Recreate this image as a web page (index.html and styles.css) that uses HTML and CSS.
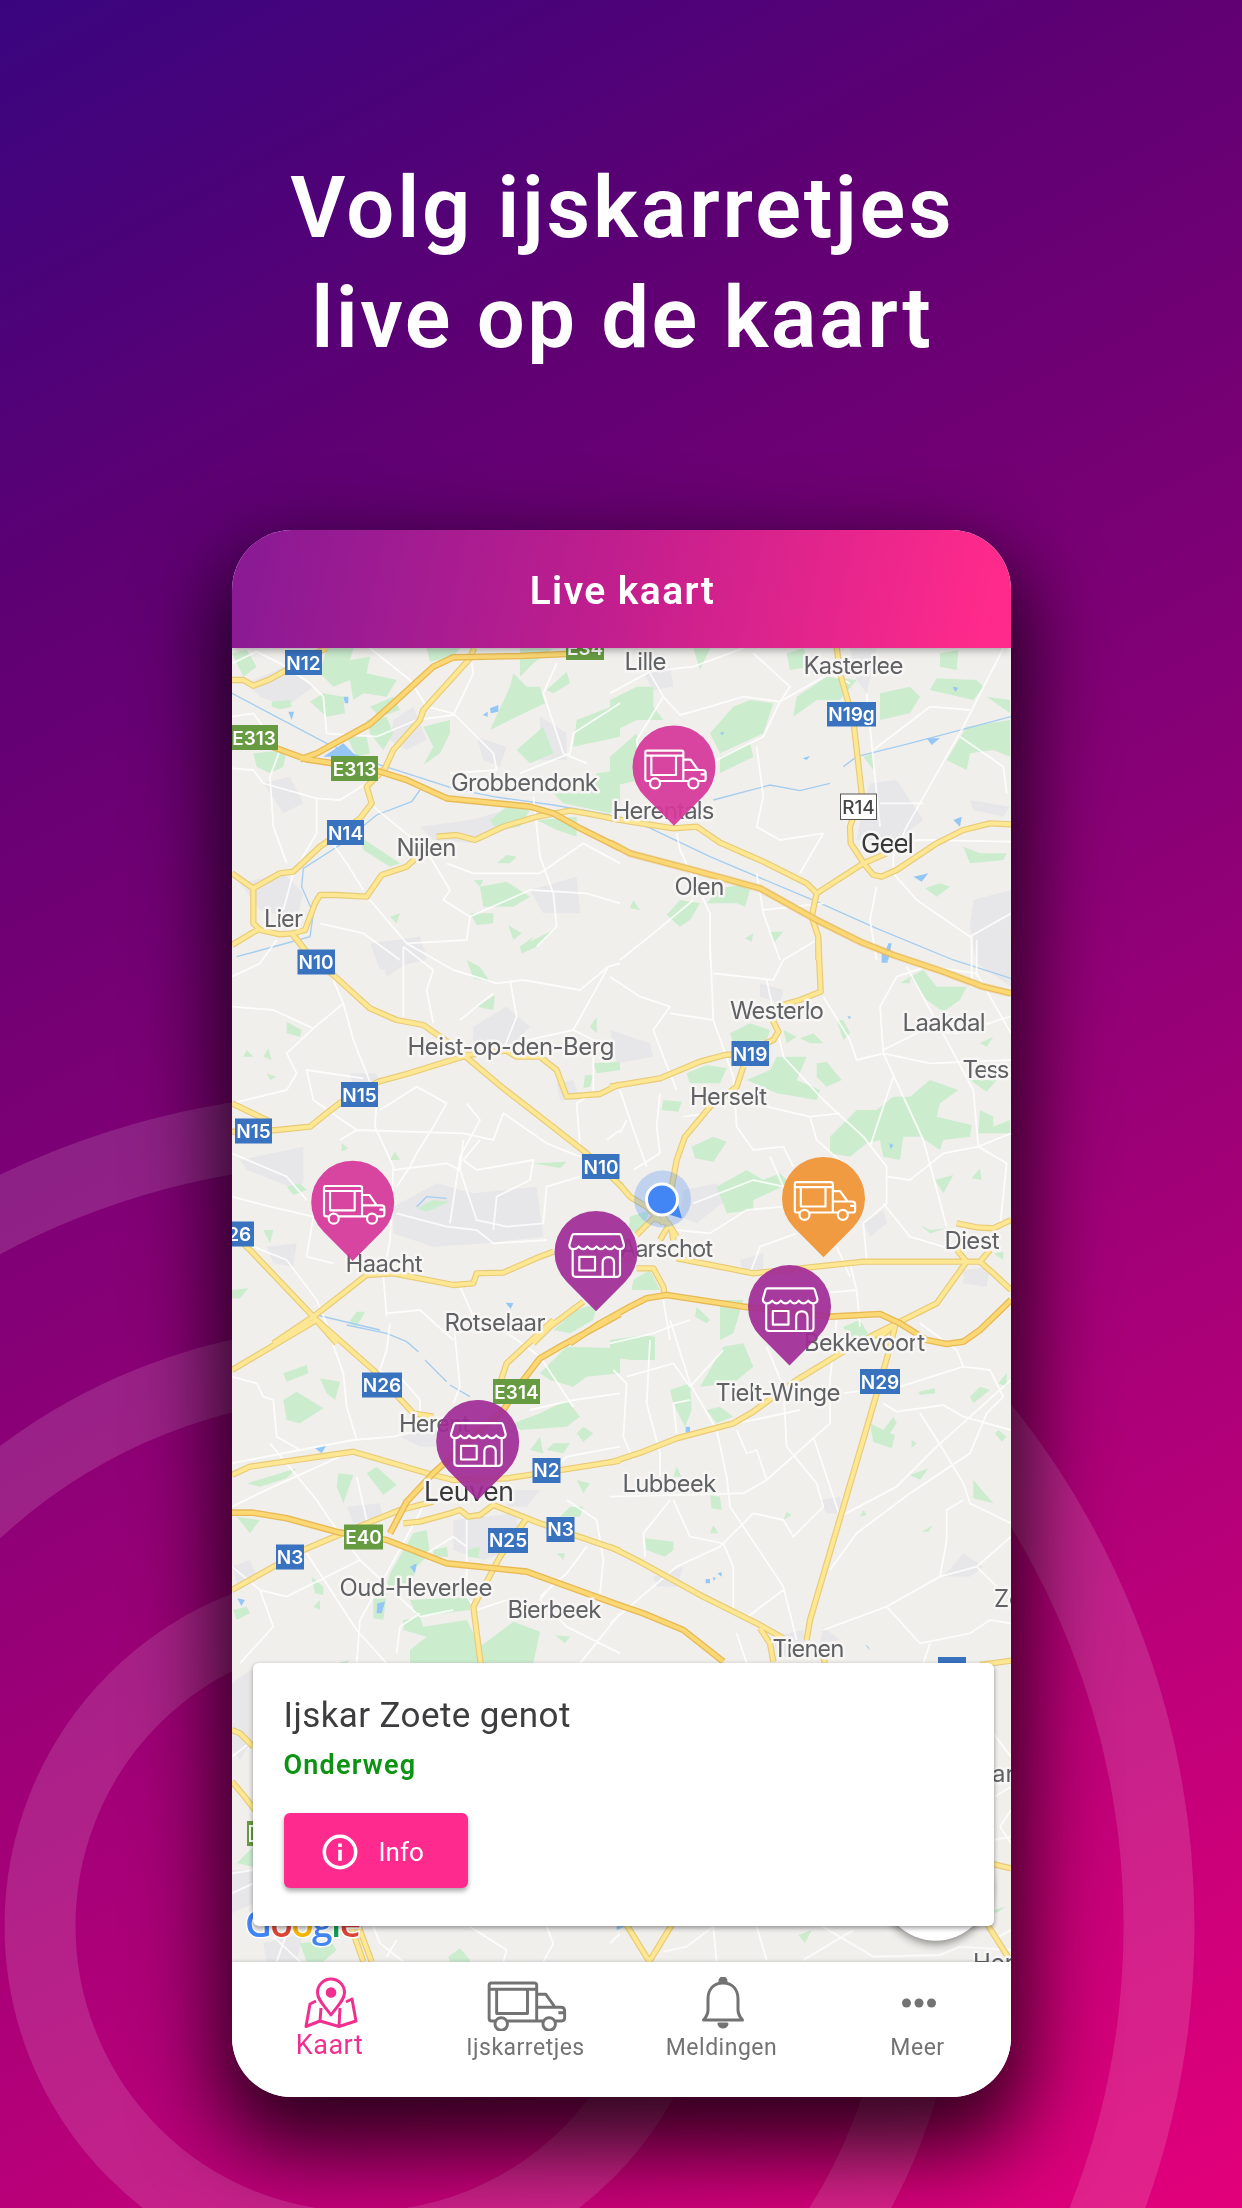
FILE: index.html
```html
<!DOCTYPE html>
<html lang="nl">
<head>
<meta charset="utf-8">
<title>Live kaart</title>
<link rel="stylesheet" href="styles.css">
</head>
<body>
<main class="poster">
  <svg class="rings" viewBox="0 0 1242 2208" aria-hidden="true">
    <circle cx="361" cy="1926" r="321" stroke-width="71"/>
    <circle cx="361" cy="1926" r="565" stroke-width="71"/>
    <circle cx="361" cy="1926" r="798" stroke-width="71"/>
  </svg>
  <h1 class="headline"><span class="line-one">Volg ijskarretjes</span><br><span class="line-two">live op de kaart</span></h1>
  <section class="phone">
    <header class="app-bar">Live kaart</header>
    <div class="map">
      <svg class="map-canvas" viewBox="232 648 779 1314">
        <defs>
          <g id="roads">
            <g transform="translate(220 520) scale(.33333)">
              <path d="M36 480 70 480 100 497 150 478 200 450 250 415 320 385M762 385 750 415 610 570 600 600 520 690 495 745 440 800 455 850 420 895 350 945 300 980 220 1055 180 1060 100 1105 36 1060M100 1105V1210L120 1230 180 1243 220 1240 255 1230 285 1150 300 1125 350 1125 440 1130 485 1065 560 1040 590 1012M36 1275 115 1228M215 1240 270 1310M650 950 710 945 765 960 850 920 950 890 1050 872 1100 880 1200 900"/>
            </g>
            <g transform="translate(610 520) scale(.33333)">
              <path d="M-10 892 60 905 190 925 260 920 330 968 460 1025 590 1090 620 1120 760 1030 830 1000M680 380 690 460 730 600 755 820 720 920 722 970 765 1035 790 1065 815 1070 860 1050 980 970 1060 930 1140 910 1203 913M620 1120 605 1190 625 1250V1320"/>
            </g>
            <g transform="translate(220 940) scale(.33333)">
              <path d="M225 -10 270 50 340 105 450 205 530 240 610 255 660 290 740 345 860 332 890 350 960 350 1010 390 1040 470 1140 462 1200 432M36 575 170 570 270 560 320 520 365 485 475 425 560 402 735 348 850 445 960 530 1100 640 1205 740M36 490 150 545M36 880 90 930 280 1130 350 1210M160 1210 280 1130 440 1005 520 1000 700 1035 760 1030 770 1000 850 998 960 950 1000 935M940 1210 990 1160 1090 1085"/>
            </g>
            <g transform="translate(610 940) scale(.33333)">
              <path d="M625 0 632 155 570 180 500 200 490 245 505 275 490 300 400 340 345 345 270 365 150 415 0 440M400 380 380 440 300 500 225 590 200 660 180 770M30 735 60 770 110 800 160 850M140 800 185 870 190 900M80 885 130 835 175 850 200 890M150 900 180 850M200 955 430 1000 760 965 1070 965 1110 965 1150 1000 1203 1050M1070 965 1045 935 1045 900M1040 850 1100 862 1150 865 1203 840M1140 930 1110 965M1070 965 980 1090 860 1150 800 1200M80 985 130 985 160 1040 165 1070M30 960 70 950"/>
            </g>
            <g transform="translate(220 1320) scale(.33333)">
              <path d="M36 150 290 0 460 150 580 280 640 290M1000 0 860 130 840 190M36 465 90 440 400 395 640 465 700 480 860 475 960 460 1200 422M36 810 250 690 380 635 540 570 640 545M550 610 600 605 690 580 720 570 745 590 780 585 820 555 960 610 1200 692M920 595 840 710 760 860 782 1030"/>
            </g>
            <g transform="translate(610 1320) scale(.33333)">
              <path d="M0 428 100 395 200 355 370 310 430 275 560 180 700 95 860 10M0 680 80 720 280 830 440 910 520 955M450 925 480 970 490 1025M835 100 780 290 600 900 590 960M640 1010 645 1030M1110 1035 1203 1022M860 0 840 80M780 50 860 10"/>
            </g>
            <g transform="translate(220 1650) scale(.33333)"><path d="M36 240 60 250 100 290M36 395 70 435 105 480M395 835 430 935M412 820 455 935"/></g>
            <g transform="translate(610 1650) scale(.33333)"><path d="M50 825 118 935 185 825M1140 640 1203 655M1130 820 1200 930"/></g>
          </g>
          <g id="highways">
            <path transform="translate(220 520) scale(.33333)" d="M240 718 290 700 450 612 520 550 640 440 700 412 900 408 1040 402M36 640 170 685 260 718 340 730 480 755 560 780 680 835 930 860 1000 880 1080 925 1200 985"/>
            <path transform="translate(610 520) scale(.33333)" d="M0 968 60 1000 250 1050 450 1105 620 1200 750 1265 850 1305 1000 1355 1120 1400 1203 1420"/>
            <path transform="translate(610 940) scale(.33333)" d="M-120 1210 -30 1150 60 1100 110 1075 170 1065 400 1100 660 1130 810 1122 870 1150 950 1200 1010 1212 1060 1205 1110 1170 1203 1080"/>
            <path transform="translate(220 1320) scale(.33333)" d="M1200 -18 1140 15 1020 80 960 115 910 180 850 270 640 460 560 545 510 640M36 578 100 578 200 595 360 638 500 660 680 730 920 755 1200 856 1270 880 1390 930 1510 1025"/>
          </g>
          <g id="truck">
            <path d="M-72 42H-80Q-86 42-86 36V-44Q-86-49-80-49H22Q28-49 28-44V42M-42 42H43M73 42H88Q95 42 95 35V18Q95 9 86 9H28M28-22H50L72 9M95 22H80M-86-34H28M-68-34V24H6V-34"/>
            <circle cx="-57" cy="49" r="15"/><circle cx="58" cy="49" r="15"/>
          </g>
          <g id="store">
            <path d="M-66-55H70Q74-55 76-50L84-22C84-8 64-6 56-18Q42-2 28-18Q14-2 2-18Q-12-2-26-18Q-38-2-52-18C-60-6-80-8-80-22L-72-50Q-70-55-66-55ZM-70-8V64Q-70 73-61 73H63Q72 73 72 64V-8M-50 13H-3V54H-50ZM20 73V31Q20 14 37 14Q54 14 54 31V73"/>
          </g>
          <path id="pin" d="M0 58.7-29.3 29.3A41.5 41.5 0 1 1 29.3 29.3Z"/>
        </defs>

        <g class="urban">
          <path transform="translate(220 520) scale(.33333)" d="M80 490 190 440 280 500 200 560 120 530ZM520 600 580 560 620 660 560 690 510 660ZM130 790 210 770 250 850 190 880ZM600 920 750 900 900 860 930 900 760 970 640 960ZM60 1090 190 1060 250 1120 230 1200 120 1170ZM770 650 860 680 840 740 790 720ZM930 1110 1070 1070 1080 1180 970 1180ZM960 590 1040 640 1040 720 960 720ZM450 1270 600 1250 620 1320 480 1350Z"/>
          <path transform="translate(610 520) scale(.33333)" d="M100 460 180 440 190 500 130 510ZM720 385 800 385 770 520 740 480ZM780 790 860 780 940 900 860 960 740 960 760 850ZM1080 840 1200 860 1180 890 1090 870ZM1090 1140 1203 1110V1400L1100 1330 1080 1220Z"/>
          <path transform="translate(220 940) scale(.33333)" d="M760 260 860 200 930 260 880 310 760 320ZM60 660 250 620 250 730 210 740 80 690ZM520 800 650 730 760 760 950 740 970 890 800 910 640 920 520 880ZM390 400 470 400 480 460 400 440ZM480 30 560 0 620 30 500 110ZM140 920 230 910 220 980 160 970ZM1010 430 1060 420 1080 480 1020 480Z"/>
          <path transform="translate(610 940) scale(.33333)" d="M0 270 120 310 130 350 20 370ZM450 130 520 150 510 190 450 170ZM220 750 320 730 350 780 260 850 210 830ZM390 960 460 940 460 1010 400 1000ZM760 850 820 810 830 850 780 890ZM1060 990 1140 980 1130 1040 1060 1030Z"/>
          <path transform="translate(220 1320) scale(.33333)" d="M380 560 480 550 490 600 400 610ZM540 350 660 320 660 380 600 380ZM700 600 890 580 900 680 790 720 700 690ZM870 510 960 510 920 560 860 560ZM36 740 90 720 110 770 50 790Z"/>
          <path transform="translate(610 1320) scale(.33333)" d="M630 540 690 530 700 580 650 580ZM1000 770 1060 700 1120 740 1080 770ZM130 770 220 740 200 800 140 800ZM640 920 690 960 630 970ZM490 950 580 930 600 1010 500 1010Z"/>
          <path transform="translate(220 1650) scale(.33333)" d="M36 100 90 60V280L60 330 36 300ZM36 660 100 660V760L36 790ZM130 880 250 850 230 935 140 935Z"/>
        </g>
        <g class="parks">
          <path transform="translate(220 520) scale(.33333)" d="M320 385 400 385 390 420 450 410 440 460 530 480 500 530 430 520 400 540 390 480 340 500 300 460ZM36 400 80 390 110 440 70 470ZM155 545 210 540 215 560 180 568 155 560ZM270 545 310 520 370 530 375 580 320 590ZM450 560 520 530 540 570 480 590ZM440 600 500 590 520 640 490 690 450 640ZM380 650 440 650 450 700 410 710ZM100 700 200 690 190 740 150 760 110 740ZM620 385 720 385 700 410 630 425ZM900 385 1000 385 940 430 900 470ZM810 630 870 500 880 460 920 500 960 500 975 550 890 590ZM1040 455 1050 490 1000 520 980 510ZM970 620 1000 700 930 730 890 690ZM610 620 690 600 690 640 660 700 610 735 640 680ZM1070 600 1200 550 1200 650 1060 680ZM1130 760 1200 750 1200 850 1170 880 1030 850 1000 820 1100 820ZM810 900 860 860 930 870 900 920 830 930ZM950 900 1070 890 1070 950 1010 930ZM420 950 540 1030 510 1040 430 990ZM780 1100 860 1085 930 1130 880 1160 790 1160ZM760 1080 790 1080 780 1100ZM830 1030 860 1005 890 1010 870 1030ZM750 1180 820 1180 820 1210 770 1215ZM865 1215 905 1240 880 1260ZM900 1280 1000 1230 950 1280 905 1300ZM510 1190 540 1180 530 1210Z"/>
          <path transform="translate(610 520) scale(.33333)" d="M0 540 80 500 130 500 130 560 160 600 80 600 0 640ZM300 640 370 560 420 540 490 550 460 640 330 700ZM330 710 420 670 430 710 330 760ZM0 710 80 640 90 780 0 800ZM250 385 300 385 270 450ZM530 400 580 385 600 440 540 450ZM550 590 560 530 650 470 740 480 690 540 620 540ZM810 520 900 500 930 530 900 580 810 600ZM960 510 980 475 1100 480 1120 500 1090 540ZM990 400 1045 390 1040 450 990 440ZM1130 530 1200 540V580ZM1070 620 1200 600V710L1150 690 1080 700 1070 750 1010 720ZM760 710 790 700 790 750ZM1060 980 1110 1000 1190 1000 1180 1020 1080 1030ZM945 1105 990 1090 1020 1100 980 1130ZM330 1105 390 1095 420 1110 405 1160 380 1150 290 1150ZM170 1185 210 1140 270 1150 240 1200 210 1220ZM60 1165 70 1140 90 1170ZM480 1235 520 1235 490 1270ZM405 1255 430 1240 425 1265Z"/>
          <path transform="translate(220 940) scale(.33333)" d="M740 60 780 80 810 125 760 115ZM770 200 825 165 820 210ZM900 20 940 -10 910 40ZM200 245 245 270 240 290 200 280ZM70 350 80 330 100 350ZM130 350 145 325 155 360ZM140 400 170 410 150 420ZM1120 370 1200 365V390L1130 400ZM1095 405 1120 405 1110 440 1090 445ZM1110 260 1130 230V280ZM940 670 1040 665 1020 685ZM200 740 240 730 260 750 220 765ZM36 1050 85 1045 60 1075 36 1075ZM130 870 160 870 150 910ZM385 1150 410 1115 435 1115 410 1160ZM510 660 525 635 540 660ZM365 610 385 625 365 635ZM1000 1170 1070 1110 1130 1090 1120 1140 1050 1180ZM590 805 640 780 690 785 620 815Z"/>
          <path transform="translate(610 940) scale(.33333)" d="M360 280 420 250 480 270 470 300 370 310ZM520 270 560 290 530 310ZM570 295 610 280 640 310 600 310ZM680 240 700 240 720 280 700 300ZM500 350 590 350 560 420 630 450 620 480 500 460 410 420 480 390ZM230 400 290 375 350 385 330 430 240 430ZM620 370 650 365 695 420 650 440 620 410ZM160 480 215 485 205 515 155 510ZM660 590 740 510 800 510 850 470 900 470 960 420 1045 450 990 490 980 530 1085 555 1080 590 1000 600 990 630 930 590 880 590 870 660 820 650 810 600 770 610 720 650 660 640ZM900 110 940 90 980 140 1070 140 1050 180 1000 215 950 180ZM870 130 900 110 900 130ZM1080 420 1160 420 1130 455ZM1110 510 1150 530 1150 560 1200 540V580L1105 580ZM1110 310 1150 290 1130 320ZM245 620 310 590 350 605 310 665 255 655ZM320 740 410 690 460 720 510 700 540 730 430 780 430 810 350 820ZM60 830 120 810 90 880 55 870ZM975 720 1030 705 1000 760ZM1085 715 1110 685 1115 720ZM70 1020 120 990 150 1050 65 1050ZM260 1100 300 1140 290 1150 255 1130ZM330 1080 400 1080 370 1180 330 1200ZM930 855 960 870 1010 865 960 880ZM1150 940 1180 935 1180 960ZM700 1160 750 1140 780 1190 720 1200Z"/>
          <path transform="translate(220 1320) scale(.33333)" d="M190 160 260 135 265 160 200 185ZM300 175 360 185 345 240 320 220ZM190 240 230 215 310 265 240 310 200 300ZM80 490 230 445 200 475 120 500ZM355 460 400 465 370 550 350 500ZM440 460 470 440 530 495 490 525ZM50 590 120 600 90 640ZM510 760 580 640 620 630 630 700 590 740 570 800 500 800ZM640 690 680 680 685 710 640 710ZM460 820 500 820 490 900 460 895ZM570 840 750 830 750 870 590 890ZM550 900 600 890 610 920 740 900 780 980 880 905 960 935 940 1030 570 1030 570 990 620 950 550 930ZM960 160 1040 80 1200 85V160L1100 170 1060 200 990 180ZM880 310 960 280 1040 240 1080 290 1040 320 900 330ZM1070 340 1090 320 1120 340 1090 365ZM930 390 960 350 970 400ZM980 390 1000 370 1050 370 1030 400ZM1070 480 1110 490 1090 520ZM1020 590 1050 560 1090 560 1080 590ZM740 690 780 680 775 715 745 710ZM275 770 310 800 310 825 285 820ZM280 860 300 840 300 870ZM1005 945 1050 950 1035 970ZM40 870 80 860 90 880 50 900ZM1010 700 1035 700 1030 720Z"/>
          <path transform="translate(610 1320) scale(.33333)" d="M0 60 100 45 135 50 135 120 60 120 0 110ZM340 80 400 70 430 140 370 190 270 200ZM180 210 240 190 245 270 225 320 190 250ZM290 270 330 260 370 290 320 310ZM190 470 200 440 215 470ZM300 525 330 530 335 570 305 565ZM300 640 310 615 325 640ZM105 655 190 665 190 690 165 710 110 690ZM520 600 530 575 545 585ZM780 310 820 330 850 290 860 310 840 340 855 345 845 385 790 365ZM900 465 955 445 930 480ZM1090 480 1150 550 1090 535ZM935 635 970 615 955 635ZM925 215 975 205 975 220 930 225ZM1080 230 1110 200 1140 210 1090 250ZM1165 190 1190 160V200ZM1155 340 1165 330 1190 350 1175 365ZM750 590 760 570 770 585ZM905 360 920 370 905 385Z"/>
          <path transform="translate(220 1650) scale(.33333)" d="M50 640 100 590V650ZM240 880 330 870 350 900 310 935H260ZM685 920 720 895 750 930V935H690ZM570 0H945L930 40H570ZM350 40 390 30 380 40Z"/>
          <path transform="translate(610 1650) scale(.33333)" d="M565 855 605 840 585 880ZM1150 780 1185 770 1160 790Z"/>
        </g>
        <g class="water">
          <path transform="translate(220 520) scale(.33333)" d="M36 520 320 670 480 735 700 805 820 830 1000 855 1170 885M600 810 575 845 470 885 360 975 250 1045 245 1100 280 1180 270 1250 180 1275 50 1310"/>
          <path transform="translate(610 520) scale(.33333)" d="M90 910 300 1010 620 1145 800 1225 1030 1320 1203 1375M310 840 480 795 570 812 660 790M700 740 740 710 900 670 1203 590"/>
          <path transform="translate(220 940) scale(.33333)" d="M590 800 620 770 680 775M290 1125 480 1170"/>
          <path transform="translate(220 1320) scale(.33333)" d="M380 15 500 40 560 65 595 95M615 120 680 185M690 195 750 230"/>
          <path class="lake" transform="translate(220 520) scale(.33333)" d="M310 710 370 670 410 710ZM370 530 385 530 385 550 375 550ZM810 565 835 555 835 575 812 580ZM205 575 222 575 215 600ZM788 585 803 575V590Z"/>
          <path class="lake" transform="translate(610 520) scale(.33333)" d="M1030 900 1055 890 1050 920ZM950 655 990 655 965 675ZM910 1070 955 1060 935 1085ZM835 1270 845 1270 835 1320H818ZM578 715 600 708 590 720ZM330 638 344 636 336 646ZM1028 500 1045 503 1036 516Z"/>
          <path class="lake" transform="translate(610 940) scale(.33333)" d="M815 40 833 45V68H815ZM838 610 850 615 842 628ZM712 228 723 230 718 238Z"/>
          <path class="lake" transform="translate(220 1320) scale(.33333)" d="M285 385 320 375 305 400ZM472 850 495 845 485 880 470 880ZM570 740 590 730 585 760ZM52 835 75 840 64 858ZM638 1435 680 1425 640 1450Z"/>
          <path class="lake" transform="translate(610 1320) scale(.33333)" d="M227 320H240V338H227ZM287 777 300 777 300 790 287 790ZM322 760 335 757V770ZM308 772 318 774 311 782ZM765 972 775 980 780 992ZM20 1818 50 1818 20 1830Z"/>
          <path class="lake" transform="translate(220 940) scale(.33333)" d="M857 1088 880 1090 872 1107Z"/>
        </g>
        <g class="lanes">
          <path transform="translate(220 520) scale(.33333)" d="M36 430 110 395 180 430 270 490 310 530 320 640 470 650 590 600 700 585 760 460 750 400M450 385 570 480 620 560 700 580 820 700 830 750 690 760M36 745 100 750 130 790 290 835 360 840 440 790M290 835V940L220 1060 190 1170M36 590 100 580 180 690 150 770 160 920 200 1030M460 860 570 950 630 1010 690 1110 670 1140 750 1190 930 1110 1100 1120 1200 1150M940 830 960 1010 1000 1120 1010 1220 950 1280M1010 430 970 520 1030 700 1100 730M1200 550 1060 640 1050 700 900 760M330 960 380 1030 430 1110M450 1140 560 1270 740 1260 750 1190M300 1210 430 1240 540 1320M680 1030 760 1060 960 1060 1090 970 1200 1030"/>
          <path transform="translate(610 520) scale(.33333)" d="M0 520 120 455 250 440 400 385M120 460 160 530 210 585 300 560 400 530 510 545 660 460 720 490M430 400 540 500 510 545 460 650 300 730M160 530 80 660 100 820M440 680 460 830 440 920 510 960 640 940 570 1060M200 940 210 990 300 1180 300 1320M1180 385 1060 620 890 920 850 1010 850 1060 920 1140 1080 1250 1203 1180M1050 650 1180 740 1190 820M810 850 940 850M790 690 960 560 1080 570M770 520 810 920M930 960 1203 965M850 965 930 960M800 1100 780 1200 800 1320M440 1060 460 1180 510 1320M250 1140 130 1240 30 1320M460 1170 640 1150M1085 1250V1400"/>
          <path transform="translate(220 940) scale(.33333)" d="M36 200 160 210 280 265 370 190 340 120M280 265 200 340 230 400 200 450 36 490M370 190 400 300 440 400 470 480 465 560 520 680 510 900 490 1010 500 1130M550 20 550 230M550 20 640 90 620 150 640 250M560 10 700 90 830 130 910 120 1080 150 1165 80 1200 70M1165 80 1060 270 880 310M870 120 890 230 850 330M720 240 820 160M1060 270 1120 300 1120 460 1070 490 1080 620M36 640 200 710 260 780M36 770 150 800 280 830 260 950 340 970M100 920 200 960 290 1080 340 1200M360 600 410 570 730 580 820 600 850 520 980 610 1080 650M410 570 280 480 260 390 430 415M480 510 590 440 680 490 640 560 590 640 570 680 530 740M520 690 680 670 720 690 770 840 860 860 970 850 980 740 1080 710M530 820 680 860 770 870 820 910 980 900M740 490 780 540 720 650 690 850M780 600 730 660 770 690 940 660 930 720 830 770 820 870M720 1040 760 1130 840 1160M500 1120 600 1110 700 1200M730 600 720 690M1200 570 1160 600M36 110 120 70 170 0"/>
          <path transform="translate(610 940) scale(.33333)" d="M300 0 310 240 370 410 380 560 430 630 520 620 550 680M0 110 90 170 180 200 130 270 160 350 200 450M310 240 180 220M310 100 490 120 520 60 620 0M470 120 520 350 640 480 760 590 830 680 830 790 760 850 770 960M640 170 720 300 740 360 820 340 960 370 1203 360M820 340 810 200 860 110 950 80M820 340 940 600 1010 860M850 410 780 620M890 80 1020 320 1090 450 1105 620 1203 580M1105 620 1000 640 900 720 830 710M1105 620 1190 670 1170 860M470 500 600 530 690 520M600 530 620 600 700 670M250 790 430 720 520 740 480 650M200 870 300 880 410 810 520 800M420 1000 450 920 560 880M820 790 900 890 1030 930M960 80 1100 100 1203 280M1100 0 1100 110M820 330 940 270 1040 280 1200 230M30 450 60 540 110 680M30 580 50 540M150 460 140 560 150 640 70 690M220 530 300 520M630 1060 740 1050 750 1160M740 1050 720 970M160 1080 180 1200M680 920 720 1010"/>
          <path transform="translate(220 1320) scale(.33333)" d="M36 170 110 190 130 230 160 240 170 350 240 390 400 360 520 350 640 320M240 390 36 430M150 370 290 540 330 600 420 720 600 890 700 870M320 20 370 160 380 260 410 360M480 150 500 90 510 10M460 150 540 170 600 240 600 290M36 560 160 500 360 410M620 540 500 760 420 900 410 1030M260 700 410 930 500 1030M36 740 120 810 200 830 420 720M120 810 160 920 60 1030M700 0 720 200 700 250M740 580 740 830 770 870 860 840M530 1000 540 920 600 880M620 700 700 650 740 680M930 270 1060 240 1200 220M970 480 1040 410 1200 380M1040 540 1130 600 1150 720 1140 820M1000 790 960 840 1040 920 1200 1000M1100 680 1040 760 960 830M850 30 960 110 1060 260M1080 1030 1200 880M410 470 440 600"/>
          <path transform="translate(610 1320) scale(.33333)" d="M0 70 130 40 180 20 240 0M120 60 110 250 150 400 150 470M10 150 50 190 40 350 70 420M180 0 240 190 320 330 350 470 360 560 520 800 560 960M50 170 190 130 240 200 340 90M240 240 190 250 200 340M380 330 410 400 440 390 470 480 400 520 0 530M470 480 660 310 660 180 680 0M470 80 520 200 530 380 620 490 640 560 550 650 520 600 430 580 400 610 330 680 200 740 0 910M610 350 690 590 860 500 980 380 1203 180M660 750 740 640 900 520 1080 400 1130 280 1180 230 1140 150 1060 140 870 200M820 250 860 275 1000 255 1060 290 1203 330M930 280 1000 390 1060 490 1080 550 1203 610M1060 540 1010 570 1010 660 990 770 830 860 640 930M990 770 1100 740 1203 650M1100 740 1160 800M830 860 930 970 1080 940 1140 900 1203 910M190 540 240 650 340 670 370 740 370 880M180 540 100 640 105 710M400 900 520 810M960 970 940 1030M930 10 1040 90 1060 140M380 940 410 1030M700 220 840 200M370 310 430 300 570 270"/>
          <path transform="translate(220 1650) scale(.33333)" d="M36 320 100 270M36 670 100 660M36 730 100 700M200 850 170 935M160 860 240 935M460 830 480 880 550 935M750 830 860 900 850 935M980 830 1000 880 970 935M500 920 530 870"/>
          <path transform="translate(610 1650) scale(.33333)" d="M160 905 230 890 310 830 320 935M440 830 470 930M580 930 730 840M630 825 790 920 990 915 1050 890 1203 900M1150 250 1203 320M1155 440 1203 410M1203 480 1170 530 1203 580M1150 570 1203 560M1150 870 1203 840M0 880 30 850"/>
        </g>
        <use href="#roads" class="road-casing"/>
        <use href="#roads" class="road-core"/>
        <use href="#highways" class="highway-casing"/>
        <use href="#highways" class="highway-core"/>

        <g class="towns">
          <text x="451" y="790.500" textLength="147">Grobbendonk</text>
          <text x="396.500" y="855.500" textLength="60">Nijlen</text>
          <text x="264" y="926.500" textLength="39">Lier</text>
          <text x="624.500" y="669.500" textLength="42">Lille</text>
          <text x="803.500" y="673.500" textLength="100">Kasterlee</text>
          <text x="612.500" y="819" textLength="102">Herentals</text>
          <text class="city" x="861" y="852.500" textLength="53">Geel</text>
          <text x="674.500" y="894.500" textLength="50">Olen</text>
          <text x="407.500" y="1054.500" textLength="207">Heist-op-den-Berg</text>
          <text x="345.500" y="1272" textLength="77">Haacht</text>
          <text x="444.500" y="1331" textLength="101">Rotselaar</text>
          <text x="730" y="1018.500" textLength="94">Westerlo</text>
          <text x="902.500" y="1030.500" textLength="83">Laakdal</text>
          <text x="962.500" y="1077.500" textLength="47">Tess</text>
          <text x="690" y="1104.500" textLength="77">Herselt</text>
          <text x="944.500" y="1248.500" textLength="55">Diest</text>
          <text x="620" y="1256.500" textLength="93">Aarschot</text>
          <text x="399" y="1431.500" textLength="71">Herent</text>
          <text class="city" x="424" y="1500.500" textLength="90">Leuven</text>
          <text x="339.500" y="1596" textLength="153">Oud-Heverlee</text>
          <text x="507.500" y="1617.500" textLength="94">Bierbeek</text>
          <text x="804" y="1350.500" textLength="121">Bekkevoort</text>
          <text x="715.500" y="1400.500" textLength="125">Tielt-Winge</text>
          <text x="622.500" y="1491.500" textLength="94">Lubbeek</text>
          <text x="772.500" y="1656.500" textLength="72">Tienen</text>
          <text x="994" y="1607">Zo</text>
          <text x="992" y="1782">ar</text>
          <text x="973" y="1971">Her</text>
        </g>

        <g class="shields">
          <rect x="285" y="650" width="37" height="25"/><text x="303.500" y="669.500">N12</text>
          <rect x="327" y="820" width="37" height="25"/><text x="345.500" y="839.500">N14</text>
          <rect x="297.500" y="949.500" width="37.500" height="25"/><text x="316" y="969">N10</text>
          <rect x="827" y="702" width="49" height="24.500"/><text x="851.500" y="721">N19g</text>
          <rect x="341" y="1082" width="37" height="25"/><text x="359.500" y="1101.500">N15</text>
          <rect x="235" y="1118.500" width="37" height="25"/><text x="253.500" y="1138">N15</text>
          <rect x="214" y="1221.500" width="40" height="25"/><text x="232" y="1241">N26</text>
          <rect x="582" y="1154" width="37.500" height="25"/><text x="601" y="1173.500">N10</text>
          <rect x="731.500" y="1041" width="37.500" height="25"/><text x="750" y="1060.500">N19</text>
          <rect x="362" y="1372.500" width="40" height="25"/><text x="382" y="1392">N26</text>
          <rect x="532.500" y="1458" width="28" height="25"/><text x="546.500" y="1477">N2</text>
          <rect x="546.500" y="1517" width="28" height="25"/><text x="560.500" y="1536">N3</text>
          <rect x="488" y="1528" width="40" height="25"/><text x="508" y="1547">N25</text>
          <rect x="276" y="1544.500" width="28" height="25"/><text x="290" y="1564">N3</text>
          <rect x="860" y="1369" width="40" height="25"/><text x="880" y="1388.500">N29</text>
          <rect x="938" y="1657" width="28" height="25"/>
          <rect class="euro" x="228" y="725" width="50" height="25"/><text x="254" y="744.500">E313</text>
          <rect class="euro" x="331" y="756" width="47" height="25"/><text x="354.500" y="775.500">E313</text>
          <rect class="euro" x="566" y="636" width="38" height="24"/><text x="585" y="655">E34</text>
          <rect class="euro" x="493" y="1379" width="47" height="25"/><text x="516.500" y="1398.500">E314</text>
          <rect class="euro" x="344" y="1524.500" width="39" height="25"/><text x="363.500" y="1544">E40</text>
          <rect class="euro" x="247" y="1821" width="30" height="25"/><path class="euro-mark" d="M250 1826h8v15h-8z"/>
          <rect class="ring" x="840.500" y="794" width="36" height="25.500"/><text class="ring-label" x="858.500" y="813.500">R14</text>
        </g>

        <circle class="gps-halo" cx="662.500" cy="1199" r="28.500"/>
        <path class="gps-dot" d="M682 1218.500 664 1213 677 1201Z"/>
        <circle class="gps-dot gps-ring" cx="662" cy="1199.500" r="15.500"/>

        <g class="pin pink" transform="translate(674 767)"><use href="#pin"/><use href="#truck" class="pin-icon" transform="scale(.33333)"/></g>
        <g class="pin pink" transform="translate(352.700 1202.300)"><use href="#pin"/><use href="#truck" class="pin-icon" transform="scale(.33333)"/></g>
        <g class="pin orange" transform="translate(823.500 1198.500)"><use href="#pin"/><use href="#truck" class="pin-icon" transform="scale(.33333)"/></g>
        <g class="pin purple" transform="translate(596 1252.500)"><use href="#pin"/><use href="#store" class="pin-icon" transform="scale(.33333)"/></g>
        <g class="pin purple" transform="translate(789.500 1306.700)"><use href="#pin"/><use href="#store" class="pin-icon" transform="scale(.33333)"/></g>
        <g class="pin purple" transform="translate(477.700 1441.500)"><use href="#pin"/><use href="#store" class="pin-icon" transform="scale(.33333)"/></g>

        <text class="google" x="245" y="1937" textLength="116"><tspan fill="#4285f4">G</tspan><tspan fill="#db4437">o</tspan><tspan fill="#f4b400">o</tspan><tspan fill="#4285f4">g</tspan><tspan fill="#0f9d58">l</tspan><tspan fill="#db4437">e</tspan></text>
        <circle class="locate" cx="935.700" cy="1885.700" r="55"/>
      </svg>
      <article class="vendor">
        <h2 class="vendor-name">Ijskar Zoete genot</h2>
        <p class="vendor-status">Onderweg</p>
        <button class="info-button" type="button">
          <svg width="36" height="36" viewBox="0 0 36 36" aria-hidden="true"><circle cx="18" cy="18" r="15.700" fill="none" stroke="currentColor" stroke-width="3.500"/><path d="M16.200 9.500h3.600v3.600h-3.600zM16.200 15.800h3.600v11h-3.600z" fill="currentColor"/></svg>
          <span>Info</span>
        </button>
      </article>
    </div>
    <nav class="tabs">
      <a class="tab active">
        <svg width="56" height="54" viewBox="0 0 56 54"><path d="M28 38C21 28 14.500 23 14.500 15.500a13.500 13.500 0 0 1 27 0C41.500 23 35 28 28 38ZM13 24 7 27 3 49.500 17 44 36 49.500 53 44 49 22 43 25M18 31 17 44M37 31 36 49.500"/><circle cx="28" cy="15.500" r="3.800" class="solid"/></svg>
        <span>Kaart</span>
      </a>
      <a class="tab">
        <svg width="82" height="54" viewBox="0 0 82 54"><g transform="translate(39 26.500) scale(.417)" class="truck"><use href="#truck"/></g></svg>
        <span>Ijskarretjes</span>
      </a>
      <a class="tab">
        <svg width="56" height="54" viewBox="0 0 56 54"><path d="M28 6C18 6 13 13 13 22V33Q13 38 8.500 43H47.500Q43 38 43 33V22C43 13 38 6 28 6Z"/><path class="solid" d="M25 5V4a3 3 0 0 1 6 0V5ZM24 47H32Q31 50 28 50Q25 50 24 47Z"/></svg>
        <span>Meldingen</span>
      </a>
      <a class="tab">
        <svg width="56" height="54" viewBox="0 0 56 54"><g class="dots"><circle cx="15.500" cy="26" r="4.500"/><circle cx="28" cy="26" r="4.500"/><circle cx="40.500" cy="26" r="4.500"/></g></svg>
        <span>Meer</span>
      </a>
    </nav>
  </section>
</main>
</body>
</html>
```
FILE: styles.css
```css
* { box-sizing: border-box; }
body { margin: 0; font-family: Roboto, "Liberation Sans", sans-serif; }

.poster {
  position: relative;
  width: 1242px;
  height: 2208px;
  overflow: hidden;
  display: flex;
  flex-direction: column;
  align-items: center;
  background: linear-gradient(152deg, #39057f 0%, #5f0073 22%, #8a0076 50%, #b80079 77%, #e2007a 100%);
}
.rings { position: absolute; inset: 0; width: 100%; height: 100%; }
.rings circle { fill: none; stroke: rgba(255, 255, 255, .13); }

.headline {
  position: relative;
  margin: 0;
  padding-top: 153px;
  height: 530px;
  color: #fff;
  font-size: 85px;
  font-weight: 600;
  line-height: 110px;
  text-align: center;
  white-space: nowrap;
}
.line-one { margin-right: -2.800px; letter-spacing: 2.800px; }
.line-two { margin-right: -2.500px; letter-spacing: 2.500px; }

.phone {
  position: relative;
  display: flex;
  flex-direction: column;
  width: 779px;
  height: 1567px;
  overflow: hidden;
  border-radius: 60px;
  background: #fff;
  box-shadow: 0 38px 84px 14px rgba(0, 0, 0, .78);
}

.app-bar {
  position: relative;
  z-index: 1;
  height: 118px;
  flex: none;
  padding: 2px 0 0 3px;
  background: linear-gradient(102deg, #8c1a94 4%, #c01e8e 48%, #ff2a8b 96%);
  box-shadow: 0 2px 8px rgba(0, 0, 0, .35);
  color: #fff;
  font-size: 39px;
  font-weight: 600;
  line-height: 118px;
  letter-spacing: 1.400px;
  text-align: center;
}

.map { position: relative; flex: none; height: 1314px; background: #f0efec; }
.map-canvas { display: block; width: 779px; height: 1314px; }
.urban { fill: #e7e7ea; }
.parks { fill: #ccecce; }
.water { fill: none; stroke: #a5cdf0; stroke-width: 4; }
.water .lake { fill: #94c7f6; stroke: none; }
.lanes { fill: none; stroke: #fff; stroke-width: 5.500; stroke-linejoin: round; opacity: .8; }
.road-casing, .road-core, .highway-casing, .highway-core { fill: none; stroke-linejoin: round; }
.road-casing { stroke: #e9ca78; stroke-width: 19; }
.road-core { stroke: #fde792; stroke-width: 12; }
.highway-casing { stroke: #e8b957; stroke-width: 20; }
.highway-core { stroke: #fbd873; stroke-width: 12; }

.towns {
  font-family: Inter, "Liberation Sans", sans-serif;
  font-size: 24px;
  fill: #5f6164;
  stroke: #f7f6f4;
  stroke-width: 5;
  stroke-linejoin: round;
  paint-order: stroke;
}
.towns .city { font-size: 26.500px; fill: #37383a; }
.shields {
  font-family: Inter, "Liberation Sans", sans-serif;
  font-size: 19px;
  font-weight: 600;
  text-anchor: middle;
  fill: #fff;
}
.shields rect { fill: #3972bf; }
.shields .euro { fill: #679b41; }
.shields .euro-mark { fill: none; stroke: #fff; stroke-width: 2; }
.shields .ring { fill: #fff; stroke: #555; stroke-width: 1; }
.shields .ring-label { fill: #444; font-weight: 500; }

.gps-halo { fill: rgba(66, 133, 244, .27); }
.gps-dot { fill: #4285f4; }
.gps-ring { stroke: #fff; stroke-width: 3; }
.pin.pink { fill: rgba(213, 56, 154, .93); }
.pin.orange { fill: rgba(239, 151, 59, .97); }
.pin.purple { fill: rgba(161, 43, 150, .92); }
.pin-icon { fill: none; stroke: #fff; stroke-width: 6.500; stroke-linejoin: round; }
.google {
  font-family: "Open Sans", sans-serif;
  font-size: 37px;
  font-weight: 600;
  stroke: #fff;
  stroke-width: 3;
  paint-order: stroke;
}
.locate { fill: #fff; filter: drop-shadow(0 3px 5px rgba(0, 0, 0, .45)); }

.vendor {
  position: absolute;
  left: 21px;
  right: 17px;
  bottom: 36px;
  height: 263px;
  padding: 31px;
  border-radius: 6px;
  background: #fff;
  box-shadow: 0 2px 5px rgba(0, 0, 0, .4);
}
.vendor-name { margin: 0; color: #3d3d3f; font-size: 35px; font-weight: 400; line-height: 44px; letter-spacing: .400px; }
.vendor-status { margin: 9px 0 0; color: #0b9311; font-size: 27px; font-weight: 600; line-height: 36px; letter-spacing: 1.200px; }
.info-button {
  display: flex;
  align-items: center;
  gap: 21px;
  width: 184px;
  height: 75px;
  margin-top: 30px;
  padding: 2px 38px 0;
  border: 0;
  border-radius: 6px;
  background: #fe2a8e;
  box-shadow: 0 3px 5px rgba(0, 0, 0, .35);
  color: #fff;
  font: 400 26px Roboto, sans-serif;
}
.info-button svg { flex: none; }

.tabs {
  position: relative;
  flex: 1;
  display: grid;
  grid-template-columns: repeat(4, 196px);
  padding: 15px 0 0 0;
  background: #fff;
  box-shadow: 0 -1px 3px rgba(0, 0, 0, .15);
}
.tab { display: flex; flex-direction: column; align-items: center; color: #737373; font-size: 23px; line-height: 28px; letter-spacing: .500px; }
.tab span { padding-top: 3px; }
.tab svg { flex: none; margin-left: 2px; fill: none; stroke: currentColor; stroke-width: 3; stroke-linejoin: round; }
.tab .truck { stroke-width: 7; }
.tab .solid, .dots { fill: currentColor; }
.dots { stroke: none; }
.active { color: #f0308f; font-size: 27px; }
.active span { padding-top: 0; }
```
